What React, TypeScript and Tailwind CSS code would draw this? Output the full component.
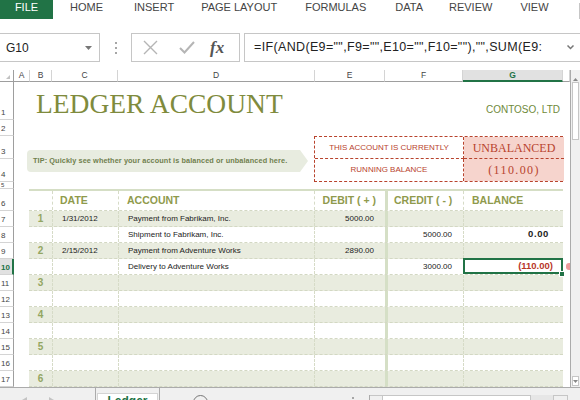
import React from "react";

type Entry = {
    no?: string
    date?: string
    account?: string
    debit?: string
    credit?: string
    balance?: string
    neg?: boolean
    selected?: boolean
}

const tabs = [
    { label: "HOME", cls: "ml-[17px]" },
    { label: "INSERT", cls: "ml-[31px]" },
    { label: "PAGE LAYOUT", cls: "ml-[27px]" },
    { label: "FORMULAS", cls: "ml-[28px]" },
    { label: "DATA", cls: "ml-[29px]" },
    { label: "REVIEW", cls: "ml-[26px]" },
    { label: "VIEW", cls: "ml-[28px]" },
]

const colHeads = [
    { label: "A", cls: "w-[16px]" },
    { label: "B", cls: "w-[22px]" },
    { label: "C", cls: "w-[66px]" },
    { label: "D", cls: "w-[197px]" },
    { label: "E", cls: "w-[70px]" },
    { label: "F", cls: "w-[78px]" },
    { label: "G", cls: "w-[100px]", active: true },
    { label: "", cls: "w-[7px]" },
]

const rowHeads = [
    { n: "1", h: "h-[38px]" },
    { n: "2", h: "h-[16px]" },
    { n: "3", h: "h-[23px]" },
    { n: "4", h: "h-[23px]" },
    { n: "5", h: "h-[7px]" },
    { n: "6", h: "h-[22px]" },
    ...["7", "8", "9", "10", "11", "12", "13", "14", "15", "16", "17"].map((n) => ({ n, h: "h-[16px]" })),
]

const entries: Entry[] = [
    { no: "1", date: "1/31/2012", account: "Payment from Fabrikam, Inc.", debit: "5000.00" },
    { account: "Shipment to Fabrikam, Inc.", credit: "5000.00", balance: "0.00" },
    { no: "2", date: "2/15/2012", account: "Payment from Adventure Works", debit: "2890.00" },
    { account: "Delivery to Adventure Works", credit: "3000.00", balance: "(110.00)", neg: true, selected: true },
    { no: "3" },
    {},
    { no: "4" },
    {},
    { no: "5" },
    {},
    { no: "6" },
]

const Ribbon = () => (
    <div className="flex h-[19px] items-start text-[11px] leading-[15px] text-[#444]">
        <div className="flex h-[19px] w-[53px] justify-center bg-[#217346] text-white">FILE</div>
        {tabs.map((t) => (
            <span key={t.label} className={t.cls}>{t.label}</span>
        ))}
        <div className="ml-auto mt-[3px] h-[16px] w-px bg-[#c6c6c6]" />
    </div>
)

const FormulaBar = () => (
    <div className="mt-[14px] flex h-[29px] items-stretch text-[#222]">
        <div className="flex w-[100px] items-center justify-between border border-l-0 border-[#c6c6c6] pl-[6px] pr-[7px] text-[12px]">
            <span>G10</span>
            <svg width="7" height="4" viewBox="0 0 7 4"><path d="M0 0h7L3.5 4z" fill="#777" /></svg>
        </div>
        <div className="flex w-[31px] flex-col items-center justify-center gap-[3px]">
            <span className="h-[2px] w-[2px] bg-[#a6a6a6]" />
            <span className="h-[2px] w-[2px] bg-[#a6a6a6]" />
            <span className="h-[2px] w-[2px] bg-[#a6a6a6]" />
        </div>
        <div className="flex w-[109px] items-center border border-[#c6c6c6] pl-[11px]">
            <svg width="15" height="15" viewBox="0 0 15 15">
                <path d="M1 1l13 13M14 1L1 14" stroke="#b5b5b5" strokeWidth="1.4" fill="none" />
            </svg>
            <svg className="ml-[21px]" width="16" height="13" viewBox="0 0 16 13">
                <path d="M1 7l4.5 4.5L15 1" stroke="#b5b5b5" strokeWidth="2" fill="none" />
            </svg>
            <span className="ml-[15px] font-['Liberation_Serif',serif] text-[17px] font-bold italic text-[#555]">fx</span>
        </div>
        <div className="ml-[4px] flex flex-1 items-center justify-between border border-r-0 border-[#c6c6c6] pl-[9px] pr-[6px] text-[12.5px] tracking-[0.35px]">
            <span>=IF(AND(E9="",F9="",E10="",F10=""),"",SUM(E9:</span>
            <svg width="7" height="5" viewBox="0 0 7 5"><path d="M0.5 0.5l3 3 3-3" stroke="#777" strokeWidth="1.5" fill="none" /></svg>
        </div>
    </div>
)

const StatusBox = () => (
    <div className="ml-[6px] grid h-[46px] w-[249px] grid-cols-[149px_100px] grid-rows-2 border border-dashed border-[#b8432d] text-[#b8432d]">
        <div className="flex items-center justify-center border-b border-r border-dashed border-[#b8432d] text-[8px]">THIS ACCOUNT IS CURRENTLY</div>
        <div className="flex items-center justify-center border-b border-dashed border-[#b8432d] bg-[#f6d4cd] font-['Liberation_Serif',serif] text-[12px]">UNBALANCED</div>
        <div className="flex items-center justify-center border-r border-dashed border-[#b8432d] text-[8px]">RUNNING BALANCE</div>
        <div className="flex items-center justify-center bg-[#f6d4cd] font-['Liberation_Serif',serif] text-[12px] tracking-[1.4px]">(110.00)</div>
    </div>
)

const TableRow = ({ e, band }: { e: Entry; band: boolean }) => (
    <div className={`flex h-[16px] border-b border-dashed border-[#d3d8c3] text-[8px] text-[#222] ${band ? "bg-[#e9ecdf]" : ""}`}>
        <div className="flex w-[23px] items-center justify-center text-[10px] font-bold text-[#93a662]">{e.no}</div>
        <div className="flex w-[66px] items-center border-l border-dashed border-[#d6dbc7] pl-[9px]">{e.date}</div>
        <div className="flex w-[196px] items-center border-l border-dashed border-[#d6dbc7] pl-[9px]">{e.account}</div>
        <div className="flex w-[71px] items-center justify-end border-l border-dashed border-[#d6dbc7] pr-[11px]">{e.debit}</div>
        <div className="flex w-[78px] items-center justify-end border-l-[3px] border-[#d5dfc6] pr-[11px]">{e.credit}</div>
        <div className="relative flex w-[100px] items-center justify-end border-l border-dashed border-[#d6dbc7] pr-[10px]">
            <span className={e.neg ? "text-[9.5px] font-bold text-[#b8362a]" : "pr-[4px] text-[9.5px] font-bold tracking-[0.6px]"}>{e.balance}</span>
            {e.selected && (
                <>
                    <div className="absolute -left-px -top-px bottom-0 right-0 border-2 border-[#217346]" />
                    <div className="absolute -bottom-[3px] -right-[2px] h-[6px] w-[6px] border border-white bg-[#217346]" />
                    <div className="absolute left-full top-[4px] ml-[3px] h-[7px] w-[6px] rounded-full bg-[#ec9b9b]" />
                </>
            )}
        </div>
    </div>
)

const Sheet = () => (
    <div className="flex h-[317px]">
        <div className="w-[571px] overflow-hidden border-r border-[#ababab]">
            <div className="flex h-[12px] text-[8.5px] text-[#444]">
                <div className="relative w-[14px] border-b border-r border-[#9e9e9e]">
                    <svg className="absolute bottom-[2px] right-[3px]" width="4" height="4" viewBox="0 0 4 4"><path d="M4 0v4H0z" fill="#c2c2c2" /></svg>
                </div>
                {colHeads.map((c) =>
                    c.active ? (
                        <div key={c.label} className={`${c.cls} flex items-center justify-center border-b-2 border-r border-b-[#217346] border-r-[#d4d4d4] bg-[#e1e1e1] font-bold text-[#217346]`}>{c.label}</div>
                    ) : (
                        <div key={c.label || "h"} className={`${c.cls} flex items-center justify-center border-b border-r border-b-[#9e9e9e] border-r-[#d4d4d4]`}>{c.label}</div>
                    )
                )}
            </div>
            <div className="flex">
                <div className="w-[14px] text-[8px] leading-none text-[#444]">
                    {rowHeads.map((r) => (
                        <div
                            key={r.n}
                            className={`${r.h} flex items-end overflow-hidden border-b border-b-[#d4d4d4] pl-[1px] ${r.n === "5" ? "pb-0 text-[6px]" : "pb-[2px]"} ${r.n === "10" ? "border-r-2 border-r-[#217346] bg-[#e1e1e1] font-bold text-[#217346]" : "border-r border-r-[#9e9e9e]"}`}
                        >
                            {r.n}
                        </div>
                    ))}
                </div>
                <div className="w-[556px]">
                    <div className="flex h-[38px] justify-between">
                        <div className="pl-[22px] pt-[8px] font-['Liberation_Serif',serif] text-[27.5px] leading-none text-[#7f8b3d]">LEDGER ACCOUNT</div>
                        <div className="pr-[10px] pt-[23px] text-[10px] leading-none text-[#6f8a3a]">CONTOSO, LTD</div>
                    </div>
                    <div className="h-[16px]" />
                    <div className="flex h-[46px] items-start">
                        <div className="ml-[13px] mt-[14px] flex h-[22px] w-[281px] items-center rounded-l-[4px] bg-[#e8ece0] pl-[6px] text-[7.3px] font-bold tracking-[0.1px] text-[#70804e] [clip-path:polygon(0_0,273px_0,281px_50%,273px_100%,0_100%)]">
                            TIP: Quickly see whether your account is balanced or unbalanced here.
                        </div>
                        <StatusBox />
                    </div>
                    <div className="h-[7px]" />
                    <div className="ml-[15px] w-[534px]">
                        <div className="border-t-2 border-[#d5dec5]">
                            <div className="flex h-[20px] border-b border-dashed border-[#d3d8c3] text-[10.5px] font-bold text-[#8f9a4c]">
                                <div className="w-[23px]" />
                                <div className="flex w-[66px] items-center border-l border-dashed border-[#d6dbc7] pl-[7px]">DATE</div>
                                <div className="flex w-[196px] items-center border-l border-dashed border-[#d6dbc7] pl-[8px]">ACCOUNT</div>
                                <div className="flex w-[71px] items-center justify-end border-l border-dashed border-[#d6dbc7] pr-[9px]">DEBIT ( + )</div>
                                <div className="flex w-[78px] items-center border-l-[3px] border-[#d5dfc6] pl-[6px]">CREDIT ( - )</div>
                                <div className="flex w-[100px] items-center border-l border-dashed border-[#d6dbc7] pl-[8px]">BALANCE</div>
                            </div>
                        </div>
                        {entries.map((e, i) => (
                            <TableRow key={i} e={e} band={i % 2 === 0} />
                        ))}
                    </div>
                </div>
            </div>
        </div>
        <div className="flex w-[9px] flex-col bg-[#f0f0f0]">
            <div className="flex h-[12px] items-end justify-center pb-[1px]">
                <svg width="5" height="3" viewBox="0 0 5 3"><path d="M0 3h5L2.5 0z" fill="#888" /></svg>
            </div>
            <div className="mx-[1px] h-[58px] border border-[#c6c6c6] bg-white" />
            <div className="mt-auto mb-[1px] mx-[1px] flex h-[10px] items-center justify-center border border-[#c6c6c6] bg-white">
                <svg width="5" height="3" viewBox="0 0 5 3"><path d="M0 0h5L2.5 3z" fill="#888" /></svg>
            </div>
        </div>
    </div>
)

const BottomBar = () => (
    <div className="flex h-[13px] items-start overflow-hidden border-t border-[#ababab] bg-[#f0f0f0]">
        <svg className="ml-[22px] mt-[9px]" width="5" height="6" viewBox="0 0 5 6"><path d="M5 0v6L0 3z" fill="#c4c4c4" /></svg>
        <svg className="ml-[22px] mt-[9px]" width="5" height="6" viewBox="0 0 5 6"><path d="M0 0v6l5-3z" fill="#c4c4c4" /></svg>
        <div className="ml-[41px] flex h-full w-[65px] border-x border-[#ababab] px-[1px]">
            <div className="mt-[5px] flex h-[20px] w-full justify-center border-x border-t border-[#d4d4d4] bg-white pt-[1px] text-[12px] font-bold leading-none text-[#217346] underline">Ledger</div>
        </div>
        <div className="ml-[33px] mt-[7px] h-[15px] w-[15px] rounded-full border border-[#777]" />
        <div className="ml-[144px] mt-[9px] h-[2px] w-[2px] bg-[#a6a6a6]" />
        <div className="ml-[15px] mt-[7px] flex h-[20px] w-[199px] border-l border-[#ababab]">
            <div className="w-[13px] border-r border-t border-[#c6c6c6]" />
            <div className="w-[149px] border-r border-t border-[#c6c6c6] bg-white" />
            <div className="w-[22px] bg-[#e6e6e6]" />
            <div className="w-[15px] border-x border-t border-[#c6c6c6]" />
        </div>
    </div>
)

export default function App() {
    return (
        <div className="h-[400px] w-[580px] overflow-hidden bg-white font-['Liberation_Sans',Arial,sans-serif]">
            <Ribbon />
            <FormulaBar />
            <div className="h-[8px]" />
            <Sheet />
            <BottomBar />
        </div>
    )
}
